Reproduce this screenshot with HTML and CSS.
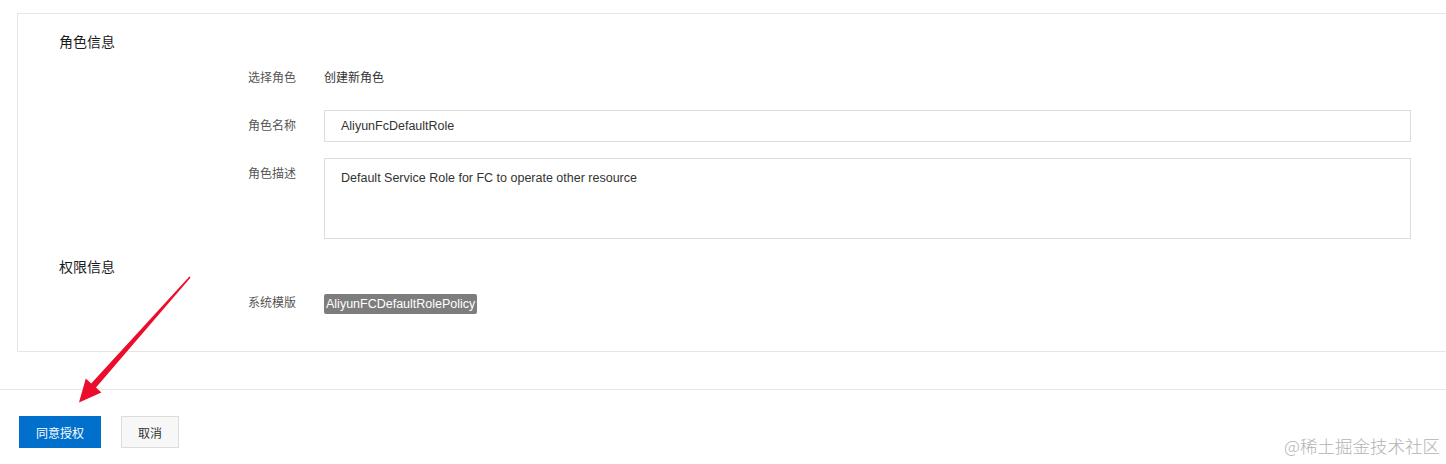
FILE: index.html
```html
<!DOCTYPE html>
<html lang="zh-CN">
<head>
<meta charset="utf-8">
<title>角色授权</title>
<link rel="stylesheet" href="styles.css">
</head>
<body>
<div class="page">
  <div class="panel">
    <div class="section-title">角色信息</div>
    <div class="row">
      <div class="label">选择角色</div>
      <div class="value">创建新角色</div>
    </div>
    <div class="row">
      <div class="label">角色名称</div>
      <div class="control"><div class="input">AliyunFcDefaultRole</div></div>
    </div>
    <div class="row">
      <div class="label">角色描述</div>
      <div class="control"><div class="textarea">Default Service Role for FC to operate other resource</div></div>
    </div>
    <div class="section-title second">权限信息</div>
    <div class="row">
      <div class="label">系统模版</div>
      <div class="value"><span class="tag">AliyunFCDefaultRolePolicy</span></div>
    </div>
  </div>
  <div class="footer">
    <button class="btn btn-primary">同意授权</button>
    <button class="btn btn-default">取消</button>
  </div>
  <svg class="arrow" width="220" height="420" viewBox="0 0 220 420">
    <polygon points="189.4,276.4 190.6,277.4 96,387.6 101.4,392.4 79,402.5 85.8,378.6 91.2,383.4" fill="#ec0c2b"/>
  </svg>
  <div class="watermark">@稀土掘金技术社区</div>
</div>
</body>
</html>
```
FILE: styles.css
```css
html, body {
  margin: 0;
  padding: 0;
  background: #fff;
}
body {
  font-family: "Liberation Sans", "Noto Sans CJK SC", sans-serif;
  color: #333;
  font-size: 12px;
  overflow: hidden;
}
.page {
  position: relative;
  width: 1446px;
  height: 464px;
  padding-top: 13px;
  box-sizing: border-box;
}
.panel {
  margin-left: 17px;
  border: 1px solid #e6e6e6;
  border-right: none;
  padding: 18px 35px 32px 41px;
}
.section-title {
  font-size: 14px;
  line-height: 20px;
  height: 20px;
  color: #1a1a1a;
  font-weight: 400;
  margin-bottom: 10px;
}
.section-title.second {
  margin-top: 18px;
  margin-bottom: 10px;
}
.row {
  display: flex;
  align-items: flex-start;
  margin-left: 189px;
  margin-bottom: 16px;
}
.row:last-child {
  margin-bottom: 0;
}
.label {
  width: 76px;
  flex: none;
  line-height: 32px;
  color: #555;
}
.value {
  line-height: 32px;
  height: 32px;
  color: #333;
  display: flex;
  align-items: center;
}
.control {
  flex: 1;
}
.input {
  height: 32px;
  box-sizing: border-box;
  border: 1px solid #dcdcdc;
  padding: 0 16px;
  line-height: 30px;
  color: #333;
  font-size: 12.5px;
}
.textarea {
  height: 81px;
  box-sizing: border-box;
  border: 1px solid #dcdcdc;
  padding: 10px 16px;
  line-height: 18px;
  color: #333;
  font-size: 12.5px;
}
.tag {
  display: inline-block;
  background: #7d7d7d;
  color: #fff;
  height: 20px;
  line-height: 20px;
  padding: 0 2px;
  border-radius: 2px;
  font-size: 12.5px;
  margin-top: 1px;
}
.footer {
  margin-top: 37px;
  border-top: 1px solid #e6e6e6;
  padding: 26px 19px 0;
  display: flex;
  gap: 20px;
}
.btn {
  height: 32px;
  box-sizing: border-box;
  font-family: "Liberation Sans", "Noto Sans CJK SC", sans-serif;
  font-size: 12px;
  border-radius: 0;
  cursor: pointer;
  padding: 0;
}
.btn-primary {
  width: 82px;
  background: #0070cc;
  border: 1px solid #0070cc;
  color: #fff;
}
.btn-default {
  width: 58px;
  background: #f7f7f7;
  border: 1px solid #dcdcdc;
  color: #333;
}
.arrow {
  position: absolute;
  left: 0;
  top: 0;
  pointer-events: none;
}
.watermark {
  position: absolute;
  right: 6px;
  bottom: 7px;
  font-size: 17.5px;
  line-height: 22px;
  color: #b3b3b3;
  font-family: "Noto Sans CJK SC", sans-serif;
  font-weight: 300;
}
```
